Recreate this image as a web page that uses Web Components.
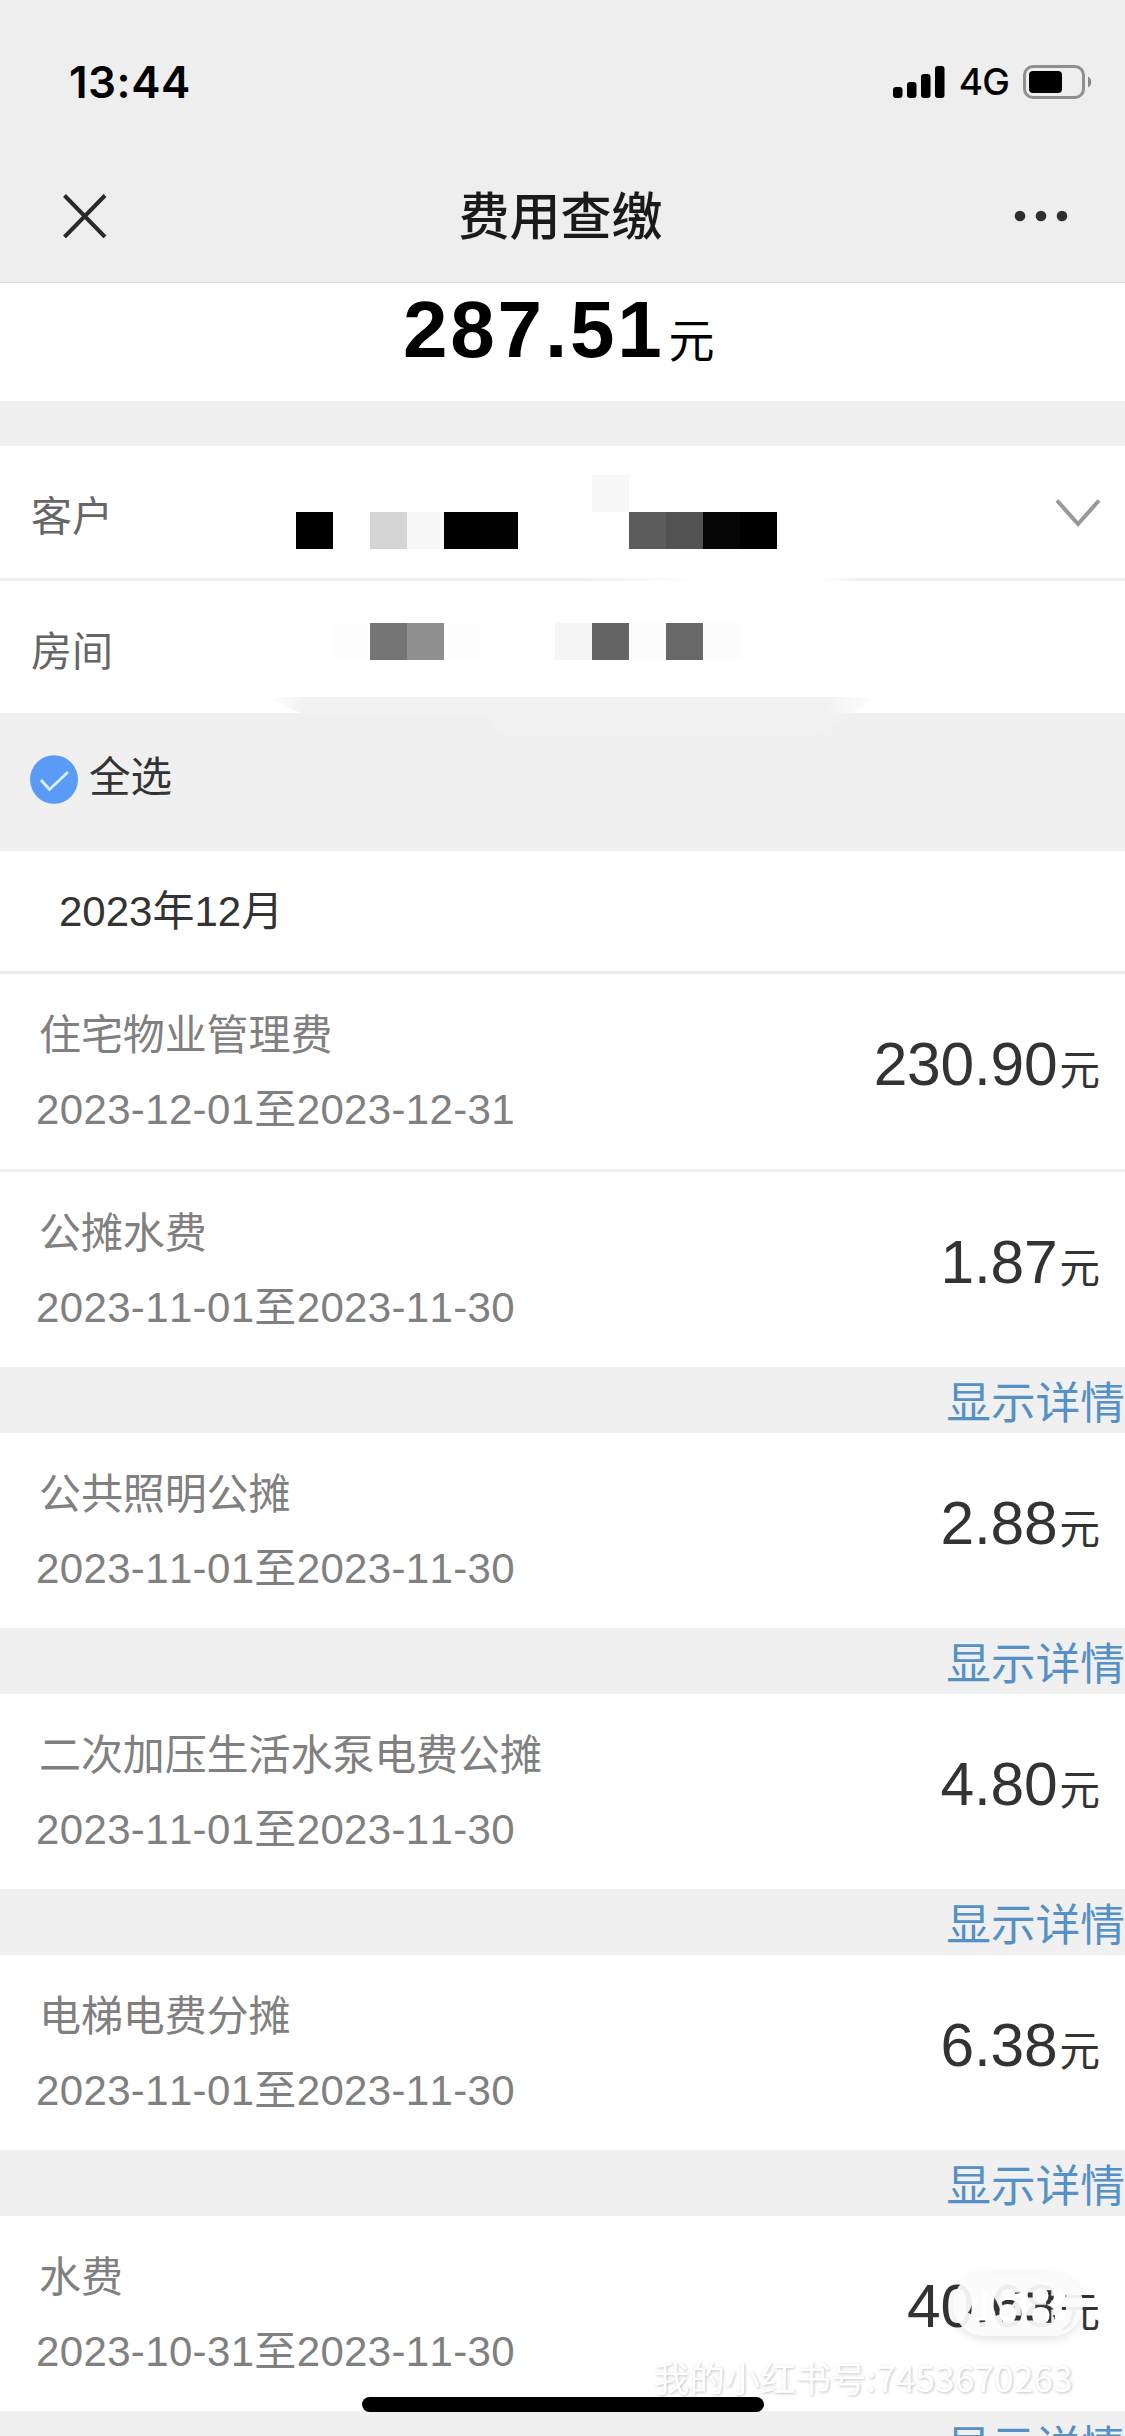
<!DOCTYPE html>
<html lang="zh-CN">
<head>
<meta charset="utf-8">
<title>费用查缴</title>
<style>
html,body{margin:0;padding:0}
body{width:1125px;height:2436px;overflow:hidden;background:#f0f0f0;font-family:"Liberation Sans","Noto Sans CJK SC",sans-serif;font-size:42px;color:#333;font-kerning:none}
</style>
</head>
<body>
<fee-app></fee-app>
<script>
const define = (name, html) => customElements.define(name, class extends HTMLElement {
  constructor() {
    super();
    const t = document.createElement('template');
    t.innerHTML = html;
    this.attachShadow({ mode: 'open' }).append(t.content.cloneNode(true));
  }
});

define('status-bar', `
<style>
:host{display:flex;box-sizing:border-box;height:144px;padding:54px 32px 0 69px;justify-content:space-between;align-items:flex-start;color:#000}
.time{font:600 44px/56px Inter,sans-serif;letter-spacing:.5px}
.right{display:flex;align-items:center;height:56px}
.net{font:500 37px/58px Inter,sans-serif;letter-spacing:-.8px;margin:0 14px 0 14px}
svg{display:block}
</style>
<span class="time">13:44</span>
<div class="right">
<svg width="52" height="34" viewBox="0 0 52 34"><rect x="0" y="22" width="9.5" height="11" rx="3"/><rect x="14" y="17" width="9.5" height="16" rx="3"/><rect x="28" y="9" width="9.5" height="24" rx="3"/><rect x="42" y="1" width="9.5" height="32" rx="3"/></svg>
<span class="net">4G</span>
<svg width="70" height="36" viewBox="0 0 70 36"><rect x="1.5" y="2.5" width="59" height="31" rx="8.5" fill="none" stroke="#8f8f8f" stroke-width="3"/><rect x="6" y="7" width="33" height="22" rx="4"/><path d="M65 12.5a6.3 6.3 0 0 1 0 11z" fill="#8a8a8a"/></svg>
</div>`);

define('nav-bar', `
<style>
:host{display:flex;box-sizing:border-box;height:139px;border-bottom:1px solid #dcdcdc;padding:0 57px 0 63px;justify-content:space-between;align-items:center}
.title{font:500 51px/72px "Noto Sans CJK SC",sans-serif;color:#1a1a1a;margin-left:-10px}
svg{display:block;flex:none;margin-top:5px}
</style>
<svg width="54" height="44" viewBox="0 0 54 44"><path d="M1.5 1.5L42 43M42 1.5L1.5 43" stroke="#2a2a2a" stroke-width="4" fill="none"/></svg>
<span class="title"><slot></slot></span>
<svg width="54" height="12" viewBox="0 0 54 12" fill="#2f2f2f"><circle cx="6" cy="6" r="5.3"/><circle cx="27" cy="6" r="5.3"/><circle cx="48" cy="6" r="5.3"/></svg>`);

define('total-sum', `
<style>
:host{display:flex;box-sizing:border-box;height:118px;background:#fff;align-items:baseline;padding:5px 0 0 403px;color:#000}
b{font-size:80px;line-height:84px;letter-spacing:2.8px}
span{font-size:46px;line-height:60px;margin-left:4px}
</style>
<b><slot></slot></b><span>元</span>`);

define('info-row', `
<style>
:host{display:block;box-sizing:border-box;position:relative;background:#fff;height:134px;padding:41px 24px 0 31px}
.l{display:flex;justify-content:space-between}
.t{color:#666;font-size:41px;line-height:60px}
</style>
<div class="l"><span class="t"><slot></slot></span><slot name="end"></slot></div><slot name="mosaic"></slot>`);

/* Row of opaque cells that hides private data */
customElements.define('mosaic-mask', class extends HTMLElement {
  connectedCallback() {
    const root = this.attachShadow({ mode: 'open' });
    const cells = this.getAttribute('cells').split(' ').map(c => {
      const [col, row, fill] = c.split(',');
      return `<i style="grid-column:${+col + 1};grid-row:${+row + 1};background:${fill}"></i>`;
    }).join('');
    root.innerHTML = `<style>:host{position:absolute;left:296px;top:var(--top);display:grid;grid-template-columns:repeat(14,37px);grid-auto-rows:37px}</style>${cells}`;
  }
});

define('chevron-down', `
<style>:host{display:block;padding:12px 0 0}svg{display:block}</style>
<svg width="46" height="30" viewBox="0 0 46 30"><path d="M2 1.5L23 25L44 1.5" fill="none" stroke="#999" stroke-width="4"/></svg>`);

define('select-all', `
<style>
:host{display:flex;box-sizing:border-box;height:138px;padding:32px 0 0 30px;align-items:flex-start;background:#f0f0f0;position:relative}
svg{display:block;margin-top:10px}
span{font-size:41.5px;line-height:60px;margin:3px 0 0 11px;color:#333}
</style>
<svg width="48" height="49" viewBox="0 0 48 49"><ellipse cx="24" cy="24.5" rx="24" ry="24.3" fill="#5b9bf8"/><path d="M11 25l8.5 9.5L38 17" fill="none" stroke="#d8f0ff" stroke-width="2.8"/></svg>
<span><slot></slot></span>`);

define('month-head', `
<style>
:host{display:block;box-sizing:border-box;height:123px;background:#fff;border-bottom:3px solid #ececec;padding:31px 0 0 59px;line-height:60px;color:#333}
</style>
<slot></slot>`);

customElements.define('fee-item', class extends HTMLElement {
  connectedCallback() {
    const a = n => this.getAttribute(n);
    this.attachShadow({ mode: 'open' }).innerHTML = `
<style>
:host{display:block}
.row{display:flex;box-sizing:border-box;height:195px;background:#fff;justify-content:space-between;align-items:flex-start;padding:32px 25px 0 36px}
:host([line]) .row{height:198px;border-bottom:3px solid #efefef}
.info{display:flex;flex-direction:column;gap:14px;color:#808080;line-height:60px}
.name{padding-left:3px;letter-spacing:-.1px}
.date{letter-spacing:.35px}
.sum{display:flex;align-items:baseline;padding-top:28px;line-height:60px;color:#333}
.sum b{font-weight:400;font-size:60.5px;letter-spacing:-.2px}
.sum span{margin-left:2px;font-size:40.5px}
.more{display:flex;justify-content:flex-end;height:66px;background:#f0f0f0;color:#5590c6;font:400 44.7px/66px "Noto Sans CJK SC",sans-serif}
</style>
<div class="row"><div class="info"><span class="name">${a('name')}</span><span class="date">${a('date')}</span></div><div class="sum"><b>${a('sum')}</b><span>元</span></div></div>
${this.hasAttribute('more') ? '<div class="more">显示详情</div>' : ''}`;
  }
});

define('redbook-stamp', `
<style>
:host{display:block;position:absolute;left:654px;top:2262px;width:440px}
svg{display:block;overflow:visible;margin-left:299px}
p{margin:6px 0 0;white-space:nowrap;font:400 35.4px/50px "Noto Sans CJK SC",sans-serif;color:#fff;text-shadow:1px 1px 3px rgba(0,0,0,.24)}
</style>
<svg width="130" height="84" viewBox="0 0 130 84">
<defs><mask id="m" maskUnits="userSpaceOnUse" x="-20" y="-20" width="180" height="140"><rect x="-20" y="-20" width="180" height="140" fill="#fff"/><text x="15" y="57" font-family="Noto Sans CJK SC" font-weight="700" font-size="33" fill="#000" stroke="#000" stroke-width="1">小红书</text></mask>
<filter id="s" x="-20%" y="-30%" width="140%" height="170%"><feDropShadow dx="0" dy="3" stdDeviation="5" flood-color="#000" flood-opacity=".12"/></filter></defs>
<g mask="url(#m)"><rect x="0" y="11" width="130" height="63" rx="31.5" fill="#fcfcfc" fill-opacity=".93" filter="url(#s)"/></g></svg>
<p>我的小红书号:7453670263</p>`);

define('home-indicator', `
<style>:host{display:block;position:absolute;left:362px;top:2397px;width:402px;height:15px;border-radius:8px;background:#000}</style>`);

define('fee-app', `
<style>
:host{display:block;position:relative;width:1125px;height:2436px;overflow:hidden}
header{background:#eee}
.gap{height:45px;background:#f0f0f0}
.fade{height:3px;background:linear-gradient(90deg,#efefef 580px,#fff 700px,#fff 820px,#efefef 860px)}
.smear{position:absolute;left:266px;top:697px;width:614px;height:38px;background:linear-gradient(90deg,transparent,#f2f2f2 40px,#f2f2f2 560px,transparent);clip-path:polygon(0 0,100% 0,90% 100%,38% 100%,36% 50%,6% 44%)}
</style>
<header><status-bar></status-bar><nav-bar>费用查缴</nav-bar></header>
<total-sum>287.51</total-sum>
<div class="gap"></div>
<info-row style="height:132px">客户<chevron-down slot="end"></chevron-down>
<mosaic-mask slot="mosaic" style="--top:29px" cells="8,0,#f7f7f7 0,1,#000 2,1,#d5d5d5 3,1,#f7f7f7 4,1,#000 5,1,#020202 9,1,#5c5c5c 10,1,#525252 11,1,#050505 12,1,#000"></mosaic-mask></info-row>
<div class="fade"></div>
<info-row style="height:132px">房间
<mosaic-mask slot="mosaic" style="--top:42px" cells="1,0,#fdfdfd 2,0,#757575 3,0,#8f8f8f 4,0,#fdfdfd 7,0,#f5f5f5 8,0,#646464 9,0,#fcfcfc 10,0,#686868 11,0,#fcfcfc 12,0,#fefefe"></mosaic-mask></info-row>
<select-all>全选</select-all>
<month-head>2023年12月</month-head>
<fee-item line name="住宅物业管理费" date="2023-12-01至2023-12-31" sum="230.90"></fee-item>
<fee-item more name="公摊水费" date="2023-11-01至2023-11-30" sum="1.87"></fee-item>
<fee-item more name="公共照明公摊" date="2023-11-01至2023-11-30" sum="2.88"></fee-item>
<fee-item more name="二次加压生活水泵电费公摊" date="2023-11-01至2023-11-30" sum="4.80"></fee-item>
<fee-item more name="电梯电费分摊" date="2023-11-01至2023-11-30" sum="6.38"></fee-item>
<fee-item more name="水费" date="2023-10-31至2023-11-30" sum="40.68"></fee-item>
<div class="smear"></div>
<redbook-stamp></redbook-stamp>
<home-indicator></home-indicator>`);
</script>
</body>
</html>
